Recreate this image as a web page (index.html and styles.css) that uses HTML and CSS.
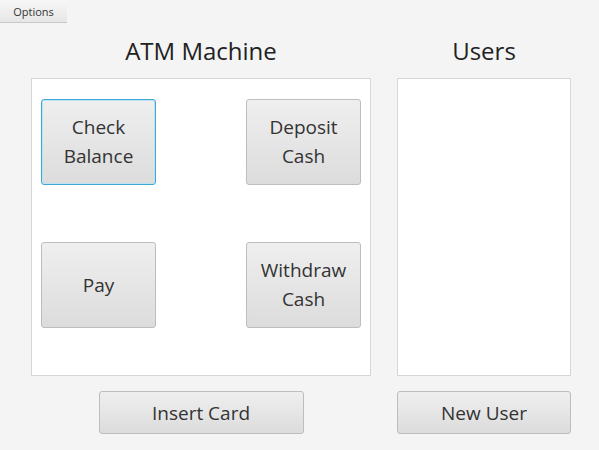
FILE: index.html
```html
<!DOCTYPE html>
<html>
<head>
<meta charset="utf-8">
<link rel="stylesheet" href="styles.css">
</head>
<body>
<div class="menubar"><div class="menu">Options</div></div>
<div class="main">
  <div class="title">ATM Machine</div>
  <div class="title">Users</div>
  <div class="panel atm">
    <button class="btn big focused">Check<br>Balance</button>
    <button class="btn big">Deposit<br>Cash</button>
    <button class="btn big">Pay</button>
    <button class="btn big">Withdraw<br>Cash</button>
  </div>
  <div class="panel users"></div>
  <div class="bottom"><button class="btn wide">Insert Card</button></div>
  <div class="bottom"><button class="btn full">New User</button></div>
</div>
</body>
</html>
```
FILE: styles.css
```css
html, body {
  margin: 0;
  padding: 0;
  background: #f4f4f4;
  font-family: "Open Sans", "Noto Sans", sans-serif;
  color: #333;
}
.menubar {
  height: 23px;
  display: flex;
}
.menu {
  width: 67px;
  height: 23px;
  box-sizing: border-box;
  background: linear-gradient(#f7f7f7, #e6e6e6);
  border-bottom: 1px solid #c8c8c8;
  font-size: 11px;
  color: #333;
  display: flex;
  align-items: center;
  justify-content: center;
}
.main {
  display: grid;
  grid-template-columns: 340px 174px;
  grid-template-rows: 55px 298px 58px;
  column-gap: 26px;
  padding-left: 31px;
}
.title {
  font-size: 24px;
  text-align: center;
  line-height: 56px;
  color: #222;
}
.panel {
  background: #fff;
  border: 1px solid #d6d6d6;
  box-sizing: border-box;
}
.atm {
  display: grid;
  grid-template-columns: 115px 115px;
  grid-template-rows: 86px 86px;
  justify-content: space-between;
  row-gap: 57px;
  padding: 20px 9px 0 9px;
}
.btn {
  font-family: inherit;
  color: #333;
  background: linear-gradient(#efefef, #dcdcdc);
  border: 1px solid #bdbdbd;
  border-radius: 3px;
  box-sizing: border-box;
  margin: 0;
  padding: 0;
}
.big {
  font-size: 19px;
  line-height: 29px;
}
.focused {
  border: 1px solid #3fa9d6;
  box-shadow: inset 0 0 0 1px #bfe2f3;
}
.bottom {
  display: flex;
  justify-content: center;
  padding-top: 15px;
}
.wide {
  width: 205px;
  height: 43px;
  font-size: 19px;
}
.full {
  width: 174px;
  height: 43px;
  font-size: 19px;
}
```
